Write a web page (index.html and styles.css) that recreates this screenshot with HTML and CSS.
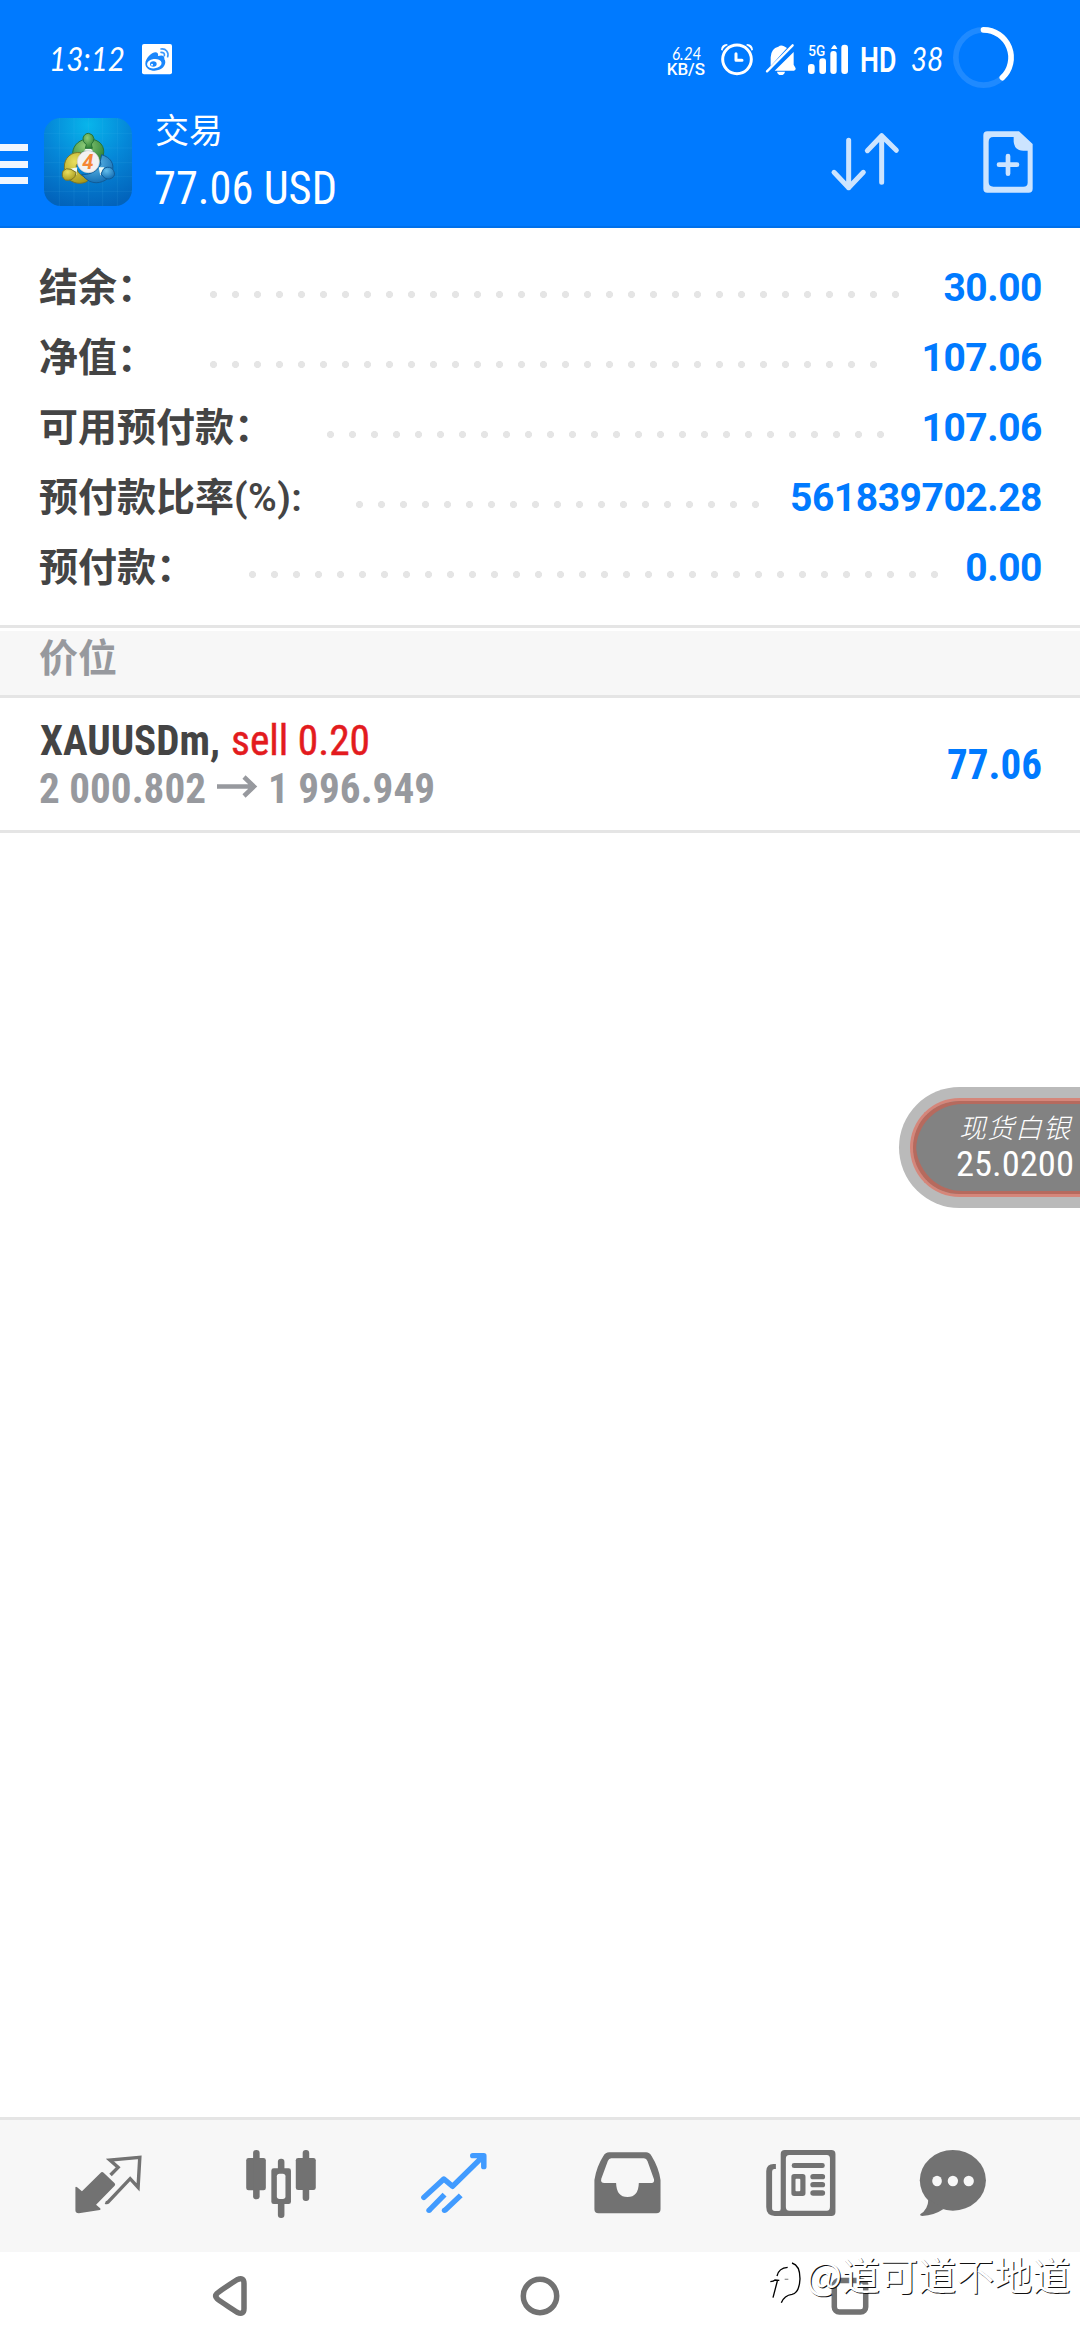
FILE: index.html
```html
<!DOCTYPE html>
<html lang="zh-CN">
<head>
<meta charset="utf-8">
<title>交易</title>
<link rel="stylesheet" href="styles.css">
</head>
<body>
<div class="screen">
  <header class="header">
    <div class="status">
      <div class="group">
        <svg width="90" height="72" viewBox="120 0 270 216"><text class="hand" x="147" y="152" font-size="98" textLength="228" lengthAdjust="spacingAndGlyphs">13:12</text></svg>
        <svg width="50" height="72" viewBox="390 0 150 216">
          <rect x="426" y="72" width="90" height="91" rx="6" fill="#fff"/>
          <path fill="#1a86fb" d="M436 131C436 115 455 96 468 97Q476 99 474 108Q492 103 493 113Q492 118 495 121C500 137 484 152 464 152C449 152 436 144 436 131z"/>
          <ellipse cx="463" cy="131" rx="22" ry="14" fill="#fff" transform="rotate(-8 463 131)"/>
          <ellipse cx="460" cy="132" rx="10" ry="8" fill="#1a86fb"/><circle cx="456" cy="134" r="3" fill="#fff"/>
          <g fill="none" stroke="#3b98fc" stroke-width="5" stroke-linecap="round"><path d="M483 87C498 85 507 97 503 110"/><path d="M483 97Q495 97 493 107"/></g>
        </svg>
      </div>
      <div class="group">
        <svg width="55" height="72" viewBox="60 0 165 216"><text class="hand" x="96" y="121" font-size="53" textLength="88" lengthAdjust="spacingAndGlyphs">6.24</text><text class="sys" x="80" y="164" font-size="48" font-weight="500" textLength="115" lengthAdjust="spacingAndGlyphs">KB/S</text></svg>
        <svg width="45" height="72" viewBox="225 0 135 216" fill="none" stroke="#fff">
          <circle cx="291" cy="118" r="43" stroke-width="9"/><path stroke-width="9" stroke-linecap="round" stroke-linejoin="round" d="M288 101V121H306"/>
          <path fill="#fff" stroke="none" d="M243 89Q245 73 260 72L264 75Q251 80 247 92zM339 89Q337 73 322 72L318 75Q331 80 335 92z"/>
        </svg>
        <svg width="42" height="72" viewBox="360 0 126 216">
          <path fill="#fff" d="M392 138V112Q393 85 415 80Q423 73 432 79L441 84zM404 152L461 96V134L467 145Q468 151 462 152zM411 155H435Q433 165 423 165Q413 165 411 155z"/>
          <path stroke="#fff" stroke-width="7" stroke-linecap="round" d="M381 154L458 76"/>
        </svg>
        <svg width="53" height="72" viewBox="486 0 159 216" fill="#fff">
          <text class="sys" x="505" y="108" font-size="44" font-weight="500" textLength="51" lengthAdjust="spacingAndGlyphs">5G</text>
          <rect x="504" y="132" width="20" height="30" rx="9"/><rect x="538" y="115" width="20" height="47" rx="9"/><rect x="571" y="93" width="19" height="69" rx="9"/><path d="M573 87Q580 75 583 75Q587 75 592 87z"/><rect x="604" y="74" width="20" height="88" rx="9"/>
        </svg>
        <svg width="48" height="72" viewBox="645 0 144 216"><text class="sys" x="660" y="157" font-size="106" font-weight="600" textLength="109" lengthAdjust="spacingAndGlyphs">HD</text></svg>
        <svg width="47" height="72" viewBox="789 0 141 216"><text class="hand" x="812" y="152" font-size="98" textLength="98" lengthAdjust="spacingAndGlyphs">38</text></svg>
        <svg width="70" height="72" viewBox="930 0 210 216" fill="none" stroke-width="17">
          <circle cx="1030.500" cy="112.500" r="83" stroke="#1f8aff"/><path stroke="#fff" stroke-linecap="round" d="M1030.500 29.500A83 83 0 0 1 1087 173"/>
        </svg>
      </div>
    </div>
    <div class="bar">
      <div class="menu"><i></i><i></i><i></i></div>
      <svg class="logo" width="88" height="88" viewBox="12 12 264 264">
        <defs>
          <radialGradient id="sky" cx=".5" cy=".08" r=".95"><stop offset="0" stop-color="#08b5eb"/><stop offset=".5" stop-color="#0587d8"/><stop offset="1" stop-color="#0263bb"/></radialGradient>
          <radialGradient id="gr" cx=".4" cy=".3" r=".8"><stop offset="0" stop-color="#8ecb78"/><stop offset="1" stop-color="#217a30"/></radialGradient>
          <radialGradient id="ye" cx=".4" cy=".3" r=".8"><stop offset="0" stop-color="#eadf5c"/><stop offset="1" stop-color="#a19419"/></radialGradient>
          <radialGradient id="bl" cx=".4" cy=".3" r=".8"><stop offset="0" stop-color="#62bdec"/><stop offset="1" stop-color="#0c66ae"/></radialGradient>
        </defs>
        <rect x="12" y="12" width="264" height="264" rx="50" fill="url(#sky)"/>
        <path d="M58 12V276M102 12V276M146 12V276M188 12V276M232 12V276M12 58H276M12 102H276M12 146H276M12 188H276M12 232H276" stroke="#5bc5f2" stroke-opacity=".16" stroke-width="2"/>
        <path fill="url(#gr)" stroke="#287439" stroke-width="3" d="M146 75C180 75 196 98 190 123Q187 139 176 146Q174 114 145 106Q118 115 112 134Q98 130 98 116C100 92 120 75 146 75z"/>
        <path fill="url(#ye)" stroke="#7c7628" stroke-width="3" d="M122 116C94 112 72 132 73 160C74 193 96 208 119 208Q141 207 148 195Q116 185 110 166Q105 152 117 146z"/>
        <path fill="url(#bl)" stroke="#125b96" stroke-width="3" d="M185 122C211 130 225 149 216 174C205 202 174 213 149 202Q135 195 125 181Q155 184 175 163Q187 150 181 142z"/>
        <path fill="#effbf5" d="M132 110L145 97L159 111zM91 164L112 160L109 183zM176 160L193 160L181 185z"/>
        <path fill="url(#gr)" stroke="#287439" stroke-width="3" d="M139 92Q127 83 129 72Q133 58 146 58Q160 60 162 74Q162 83 154 90L157 103H136z"/>
        <path fill="url(#ye)" stroke="#7c7628" stroke-width="3" d="M93 166Q78 160 69 171Q62 190 76 198Q95 202 105 187L108 175z"/>
        <path fill="url(#bl)" stroke="#125b96" stroke-width="3" d="M190 166Q200 155 216 163Q228 178 221 188Q209 200 194 192L183 180z"/>
        <circle cx="145" cy="143" r="33" fill="#f2f1f1" stroke="#d9d2cf" stroke-width="2"/>
        <text x="144" y="165" text-anchor="middle" font-family="Roboto, sans-serif" font-size="62" font-weight="700" font-style="italic" fill="#f58634" textLength="34" lengthAdjust="spacingAndGlyphs">4</text>
      </svg>
      <div class="title">
        <div class="page-name">交易</div>
        <svg width="200" height="58" viewBox="0 0 200 58"><text class="cond" fill="#fff" x="-1" y="42" font-size="47" textLength="183" lengthAdjust="spacingAndGlyphs">77.06 USD</text></svg>
      </div>
      <svg class="action" width="80" height="134" viewBox="555 216 240 402" fill="none" stroke="#cce4ff" stroke-width="15" stroke-linecap="round" stroke-linejoin="round"><path d="M626 361V503M582 457L626 503L670 457M725 487V347M682 392L725 347L769 391"/></svg>
      <svg class="doc" width="50" height="134" viewBox="1029 216 150 402"><path fill="#cce4ff" fill-rule="evenodd" d="M1042 334H1137L1178 372V506Q1178 518 1166 518H1042Q1030 518 1030 506V346Q1030 334 1042 334zM1060 351Q1046 351 1046 366V486Q1046 500 1060 500H1150Q1163 500 1163 488V392H1150Q1124 392 1121 365V351z"/><path stroke="#cce4ff" stroke-width="14" stroke-linecap="round" d="M1077 434H1131M1104 408V461"/></svg>
    </div>
  </header>

  <section class="account">
    <div class="row"><span class="label">结余：</span><span class="leader n32"></span><span class="value">30.00</span></div>
    <div class="row"><span class="label">净值：</span><span class="leader n31"></span><span class="value">107.06</span></div>
    <div class="row"><span class="label">可用预付款：</span><span class="leader n26"></span><span class="value">107.06</span></div>
    <div class="row"><span class="label">预付款比率<span class="pct">(%):</span></span><span class="leader n19"></span><span class="value">561839702.28</span></div>
    <div class="row"><span class="label">预付款：</span><span class="leader n32"></span><span class="value">0.00</span></div>
  </section>

  <h2 class="section">价位</h2>
  <section class="position">
    <svg width="420" height="132" viewBox="40 698 420 132">
      <text class="cond b" fill="#444" x="40" y="755" font-size="43" textLength="180" lengthAdjust="spacingAndGlyphs">XAUUSDm,</text>
      <text class="cond" fill="#e31b1e" stroke="#e31b1e" stroke-width=".5" x="231" y="755" font-size="43" textLength="139" lengthAdjust="spacingAndGlyphs">sell 0.20</text>
      <text class="cond b" fill="#97999e" x="39" y="803" font-size="43" textLength="167" lengthAdjust="spacingAndGlyphs">2 000.802</text>
      <path d="M217 786.500H254M244 777L254 786.500L244 796" fill="none" stroke="#97999e" stroke-width="4.500"/>
      <text class="cond b" fill="#97999e" x="268" y="803" font-size="43" textLength="167" lengthAdjust="spacingAndGlyphs">1 996.949</text>
    </svg>
    <svg width="100" height="132" viewBox="941 698 100 132"><text class="cond b" fill="#007aff" x="947" y="779" font-size="43" textLength="95" lengthAdjust="spacingAndGlyphs">77.06</text></svg>
  </section>

  <main class="blank"></main>

  <nav class="tabs">
    <svg viewBox="63.900 60 502.400 396" preserveAspectRatio="none"><path fill="#727272" d="M219 262Q220 259 224 262L238 274L294 217Q297 214 301 218L333 250Q336 254 333 257L279 314L291 325Q294 329 290 330L229 340Q219 340 219 331z"/><path fill="none" stroke="#727272" stroke-width="10" d="M321 225L343 202L319 180L406 172L401 262L378 236L313 307Q311 309 306 307"/></svg>
    <svg viewBox="566.300 60 502.400 396" preserveAspectRatio="none" fill="#727272"><rect x="715" y="174" width="57" height="97" rx="7"/><rect x="735" y="150" width="19" height="148" rx="9"/><rect x="859" y="174" width="58" height="96" rx="7"/><rect x="879" y="150" width="19" height="153" rx="9"/><rect x="807" y="176" width="19" height="178" rx="9"/><rect x="788" y="205" width="57" height="107" rx="7"/><rect x="804" y="221" width="25" height="76" rx="8" fill="#f7f7f7"/></svg>
    <svg viewBox="1068.700 60 502.400 396" preserveAspectRatio="none" fill="none" stroke="#419bff" stroke-width="16" stroke-linejoin="round"><path stroke-linecap="round" d="M1231 292L1289 237L1314 259L1402 170M1373 167H1405V200"/><path d="M1247 330L1291 284M1292 331L1338 286"/><g fill="#419bff" stroke="none"><circle cx="1246" cy="331" r="8"/><circle cx="1291" cy="331" r="8"/></g></svg>
    <svg viewBox="2.900 60 502.400 396" preserveAspectRatio="none"><path fill="#727272" fill-rule="evenodd" d="M201 157H308Q318 157 324 168Q345 203 350 240V328Q350 340 338 340H170Q158 340 158 328V240Q164 200 184 168Q190 157 201 157zM207 175Q200 175 197 183L178 236Q175 249 187 249H221Q222 291 254 291Q286 291 287 249H324Q333 249 331 238L312 183Q309 175 302 175z"/></svg>
    <svg viewBox="505.300 60 502.400 396" preserveAspectRatio="none" fill="#727272"><path fill-rule="evenodd" d="M711 150H846Q858 150 858 162V336Q858 348 846 348H682Q657 347 657 321V213Q658 192 678 192H685V207H680Q674 208 674 215V325Q674 333 682 333H694Q699 333 699 326V162Q699 150 711 150zM724 165Q714 165 714 176V321Q714 332 724 332H833Q842 332 842 321V176Q842 165 833 165z"/><rect x="731" y="189" width="96" height="15" rx="7"/><path fill-rule="evenodd" d="M738 222H763Q771 222 771 230V280Q771 288 763 288H738Q730 288 730 280V230Q730 222 738 222zM744 236Q742 236 742 239V271Q742 274 744 274H753Q756 274 756 271V239Q756 236 753 236z"/><rect x="785" y="222" width="43" height="16" rx="8"/><rect x="785" y="246" width="43" height="16" rx="8"/><rect x="785" y="271" width="43" height="16" rx="8"/></svg>
    <svg viewBox="1007.700 60 502.400 396" preserveAspectRatio="none" fill="#727272"><ellipse cx="1199" cy="241" rx="96" ry="91"/><path d="M1128 297Q1127 329 1104 343Q1103 348 1110 348Q1145 346 1172 327z"/><g fill="#f7f7f7"><ellipse cx="1153" cy="243" rx="14" ry="15.500"/><ellipse cx="1199" cy="243" rx="15" ry="15.500"/><ellipse cx="1245" cy="243" rx="15" ry="15.500"/></g></svg>
  </nav>
  <footer class="keys">
    <svg width="60" height="60" viewBox="-30 -30 60 60"><path d="M-13 -2.500Q-15.500 0 -13 2.500Q-12 4 7 16.200Q14 19.500 14 12.500V-12.500Q14 -19.500 7 -16.200Q-12 -4 -13 -2.500z"/></svg>
    <svg width="60" height="60" viewBox="-30 -30 60 60"><circle r="16.700"/></svg>
    <svg width="60" height="60" viewBox="-30 -30 60 60"><rect x="-15.700" y="-15.500" width="31.400" height="31.500" rx="5"/></svg>
  </footer>

  <div class="watermark">
    <svg width="40" height="52" viewBox="20 20 120 156" fill="none">
      <g stroke="#fff" stroke-width="9"><path d="M37 138L51 90M31 88H58M48 75Q55 50 82 46M94 36Q117 43 117 85Q115 124 92 128Q70 132 62 152"/></g>
      <g stroke="#000" stroke-width="4"><path d="M41 142L54 92M33 94Q43 93 47 89L60 90M53 77Q58 53 85 51M98 38Q122 45 122 85Q120 128 98 132Q75 135 66 157"/><path stroke="#999" d="M76 87H87"/></g>
    </svg><span>@道可道不地道</span>
  </div>
  <aside class="ticker">
    <div class="ticker-in">
      <svg width="130" height="87" viewBox="950 1104 130 87"><text class="kai" x="959" y="1138" font-size="27" textLength="111" lengthAdjust="spacing">现货白银</text><text class="cond" fill="#fff" x="956" y="1176" font-size="35" textLength="118" lengthAdjust="spacingAndGlyphs">25.0200</text></svg>
    </div>
  </aside>
</div>
</body>
</html>
```
FILE: styles.css
```css
* { box-sizing: border-box; }
body { margin: 0; font-family: Roboto, "Noto Sans CJK SC", sans-serif; }
svg { display: block; flex: none; overflow: visible; }

.screen {
  position: relative;
  width: 1080px;
  height: 2340px;
  display: flex;
  flex-direction: column;
  overflow: hidden;
  background: #fff;
}

.header {
  height: 228px;
  background: #007aff;
  border-bottom: 2px solid #0070ea;
  flex: none;
}
.status {
  display: flex;
  justify-content: space-between;
  padding: 20px 60px 0 40px;
}
.group { display: flex; }
.hand { font-family: Lato, sans-serif; font-style: italic; font-weight: 400; fill: #fff; }
.sys { font-family: Roboto, sans-serif; fill: #fff; }
.cond { font-family: "Roboto Condensed", Roboto, sans-serif; font-stretch: 75%; }
.b { font-weight: 700; }
.kai { font-family: "Noto Sans CJK SC", sans-serif; font-weight: 300; font-style: italic; fill: #fff; }

.bar { display: flex; height: 134px; }
.menu {
  width: 28px;
  margin-right: 16px;
  padding-top: 52px;
  display: flex;
  flex-direction: column;
  gap: 9.500px;
}
.menu i { height: 7px; background: #f0f6ff; }
.logo { margin: 26px 23px 0 0; }
.title { flex: 1; padding-top: 19px; color: #fff; }
.page-name { font-size: 34px; line-height: 40px; height: 51px; }
.action { margin-right: 78px; }
.doc { margin-right: 47px; }

.account { padding: 24px 39px 23px; height: 397px; flex: none; }
.row { display: flex; align-items: center; height: 70px; font-size: 39px; line-height: 58px; }
.label { margin-top: 2px; color: #444; font-weight: 700; white-space: nowrap; }
.pct { font-weight: 600; letter-spacing: .400px; }
.value {
  margin: 2px -1px 0 auto;
  color: #007aff;
  font-weight: 700;
  letter-spacing: -.450px;
}
.leader {
  height: 7px;
  margin: 15px 0 0 54px;
  background: radial-gradient(circle at 3.500px 3.500px, #e5e5e5 3.200px, transparent 3.900px) 0 0 / 22px 7px repeat-x;
}
.n32 { width: 704px; }
.n31 { width: 682px; }
.n26 { width: 572px; }
.n19 { width: 418px; }

.section {
  margin: 0;
  flex: none;
  height: 73px;
  padding: 0 39px;
  border-top: 3px solid #e5e5e5;
  border-bottom: 3px solid #e5e5e5;
  background: #f7f7f7;
  box-shadow: inset 0 3px #fff;
  color: #97999e;
  font-size: 39px;
  line-height: 62px;
  font-weight: 700;
}
.position {
  flex: none;
  display: flex;
  justify-content: space-between;
  height: 135px;
  padding: 0 39px 0 40px;
  border-bottom: 3px solid #e5e5e5;
}
.blank { flex: 1; }

.tabs {
  flex: none;
  display: grid;
  grid-template-columns: repeat(6, 173px);
  height: 135px;
  padding-left: 22px;
  border-top: 3px solid #e5e5e5;
  background: #f7f7f7;
}
.tabs svg { width: 173px; height: 132px; }
.keys {
  flex: none;
  display: flex;
  justify-content: space-between;
  align-items: center;
  height: 88px;
  padding: 0 200px;
}
.keys svg { fill: none; stroke: #727272; stroke-width: 5.500; }

.watermark {
  position: absolute;
  left: 766px;
  top: 2253px;
  display: flex;
  font: 400 38.100px/42px "Noto Sans CJK SC", sans-serif;
  color: #fff;
  white-space: nowrap;
}
.watermark svg { margin-top: 4px; }
.watermark span { text-shadow: 1px 1px 0 #111; }

.ticker {
  position: absolute;
  left: 899px;
  top: 1087px;
  width: 181px;
  height: 121px;
  padding: 11px 0 11px 11px;
  border-radius: 60.500px 0 0 60.500px;
  background: #bababa;
}
.ticker-in {
  height: 99px;
  padding: 3px 0 0 37px;
  border: 3px solid #d5867a;
  border-right: 0;
  border-radius: 49.500px 0 0 49.500px;
  background: #828282;
  box-shadow: inset 3px 3px #b66a5e, inset 3px -3px #b66a5e;
}
```
